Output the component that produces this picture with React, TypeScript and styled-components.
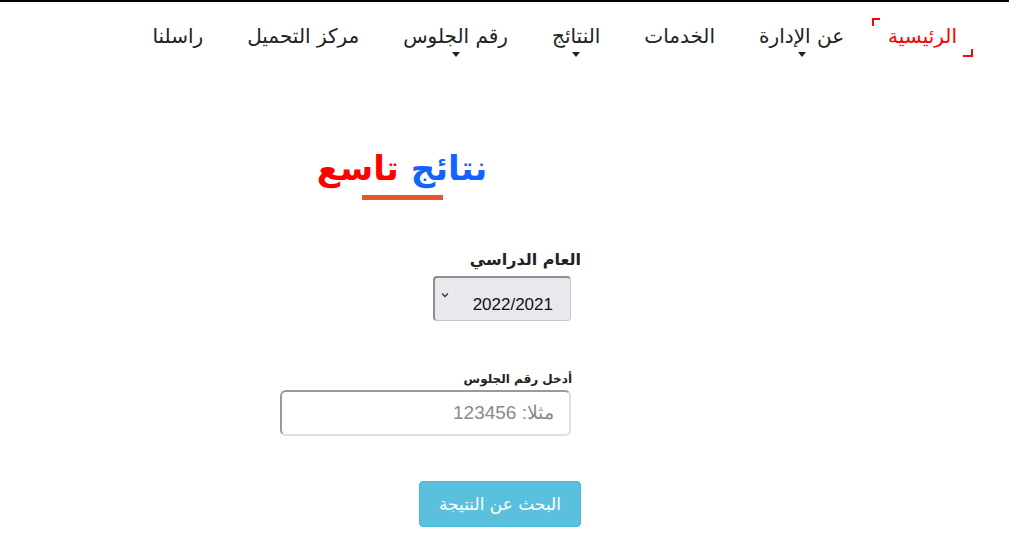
import React from "react";
import styled, { createGlobalStyle } from "styled-components";

const GlobalStyle = createGlobalStyle`
  html, body {
    margin: 0;
    padding: 0;
    background: #fff;
  }
  body {
    font-family: "DejaVu Sans", "Noto Sans", sans-serif;
  }
`;

const NAV_ITEMS: { label: string; active?: boolean; caret?: boolean }[] = [
  { label: "الرئيسية", active: true },
  { label: "عن الإدارة", caret: true },
  { label: "الخدمات" },
  { label: "النتائج", caret: true },
  { label: "رقم الجلوس", caret: true },
  { label: "مركز التحميل" },
  { label: "راسلنا" },
];

export default function App() {
  return (
    <Root dir="rtl">
      <GlobalStyle />
      <TopBar>
        <Nav>
          {NAV_ITEMS.map((item) => (
            <NavItem key={item.label} $active={item.active}>
              {item.active && (
                <>
                  <CornerTop />
                  <CornerBottom />
                </>
              )}
              {item.label}
              {item.caret && <Caret />}
            </NavItem>
          ))}
        </Nav>
      </TopBar>

      <Main>
        <TitleWrap>
          <Title>
            <Blue>نتائج</Blue> <Red>تاسع</Red>
          </Title>
          <TitleLine />
        </TitleWrap>

        <Form>
          <YearField>
            <BigLabel htmlFor="year">العام الدراسي</BigLabel>
            <SelectBox>
              <Select id="year" defaultValue="2022/2021">
                <option>2022/2021</option>
              </Select>
              <Chevron width="8" height="6" viewBox="0 0 8 6">
                <path d="M1 1.5 L4 4.5 L7 1.5" fill="none" stroke="#333" strokeWidth="1.3" />
              </Chevron>
            </SelectBox>
          </YearField>

          <SeatField>
            <SmallLabel htmlFor="seat">أدخل رقم الجلوس</SmallLabel>
            <Input id="seat" type="text" placeholder="مثلا: 123456" />
          </SeatField>

          <SearchButton type="button">البحث عن النتيجة</SearchButton>
        </Form>
      </Main>
    </Root>
  );
}

const Root = styled.div`
  width: 1009px;
  min-height: 546px;
  border-top: 2px solid #000;
  box-sizing: border-box;
`;

const TopBar = styled.header`
  height: 68px;
  display: flex;
  padding-right: 52px;
`;

const Nav = styled.nav`
  display: flex;
  align-items: center;
  gap: 44px;
`;

const NavItem = styled.a<{ $active?: boolean }>`
  position: relative;
  font-size: 20px;
  color: ${({ $active }) => ($active ? "#ff0000" : "#222")};
  text-decoration: none;
  line-height: 26px;
  white-space: nowrap;
`;

const CornerTop = styled.span`
  position: absolute;
  top: -5px;
  left: -16px;
  width: 6px;
  height: 6px;
  border-top: 2px solid #f00;
  border-left: 2px solid #f00;
`;

const CornerBottom = styled.span`
  position: absolute;
  bottom: -8px;
  right: -16px;
  width: 8px;
  height: 6px;
  border-bottom: 2px solid #f00;
  border-right: 2px solid #f00;
`;

const Caret = styled.span`
  position: absolute;
  left: 50%;
  bottom: -8px;
  margin-left: -4px;
  border-top: 5px solid #222;
  border-left: 4px solid transparent;
  border-right: 4px solid transparent;
`;

const Main = styled.main`
  display: flex;
  flex-direction: column;
  padding-right: 438px;
`;

const TitleWrap = styled.div`
  display: flex;
  flex-direction: column;
  align-items: center;
  width: 170px;
  margin-right: 84px;
  margin-top: 74px;
`;

const Title = styled.h1`
  margin: 0;
  font-size: 34px;
  font-weight: 700;
  line-height: 48px;
  font-family: "DejaVu Sans", sans-serif;
  white-space: nowrap;
`;

const Blue = styled.span`
  color: #1463ff;
`;

const Red = styled.span`
  color: #ff0000;
`;

const TitleLine = styled.div`
  width: 81px;
  height: 5px;
  background: #e8552a;
  margin-top: 3px;
`;

const Form = styled.div`
  display: flex;
  flex-direction: column;
  align-items: flex-start;
`;

const YearField = styled.div`
  display: flex;
  flex-direction: column;
  align-items: flex-start;
  margin-top: 48px;
`;

const BigLabel = styled.label`
  font-size: 16px;
  font-weight: 700;
  color: #222;
  line-height: 24px;
  margin-right: -10px;
  margin-bottom: 4px;
`;

const SelectBox = styled.div`
  position: relative;
`;

const Select = styled.select`
  appearance: none;
  width: 138px;
  height: 45px;
  box-sizing: border-box;
  border-radius: 4px;
  background: #e9e9ed;
  border-style: solid;
  border-width: 2px 1px 1px 2px;
  border-color: #8f8f8f #c8c8c8 #c8c8c8 #8f8f8f;
  font-family: "Liberation Sans", Arial, sans-serif;
  font-size: 17px;
  color: #111;
  padding: 10px 17px 0 24px;
  direction: rtl;
`;

const Chevron = styled.svg`
  position: absolute;
  left: 8px;
  top: 16px;
  pointer-events: none;
`;

const SeatField = styled.div`
  display: flex;
  flex-direction: column;
  align-items: flex-start;
  margin-top: 50px;
`;

const SmallLabel = styled.label`
  font-size: 12px;
  font-weight: 700;
  color: #222;
  line-height: 16px;
  margin-right: -1px;
  margin-bottom: 3px;
`;

const Input = styled.input`
  width: 291px;
  height: 46px;
  box-sizing: border-box;
  border-radius: 6px;
  border-style: solid;
  border-width: 2px;
  border-color: #9a9a9a #dedede #dedede #9a9a9a;
  font-family: "Liberation Sans", Arial, sans-serif;
  font-size: 19px;
  padding: 0 15px;
  outline: none;
  &::placeholder {
    color: #8a8a8a;
  }
`;

const SearchButton = styled.button`
  margin-top: 45px;
  margin-right: -10px;
  width: 162px;
  height: 46px;
  border: 1px solid #46b8da;
  border-radius: 4px;
  background: #5bc0de;
  color: #fff;
  font-family: "DejaVu Sans", sans-serif;
  font-size: 17px;
  cursor: pointer;
`;
